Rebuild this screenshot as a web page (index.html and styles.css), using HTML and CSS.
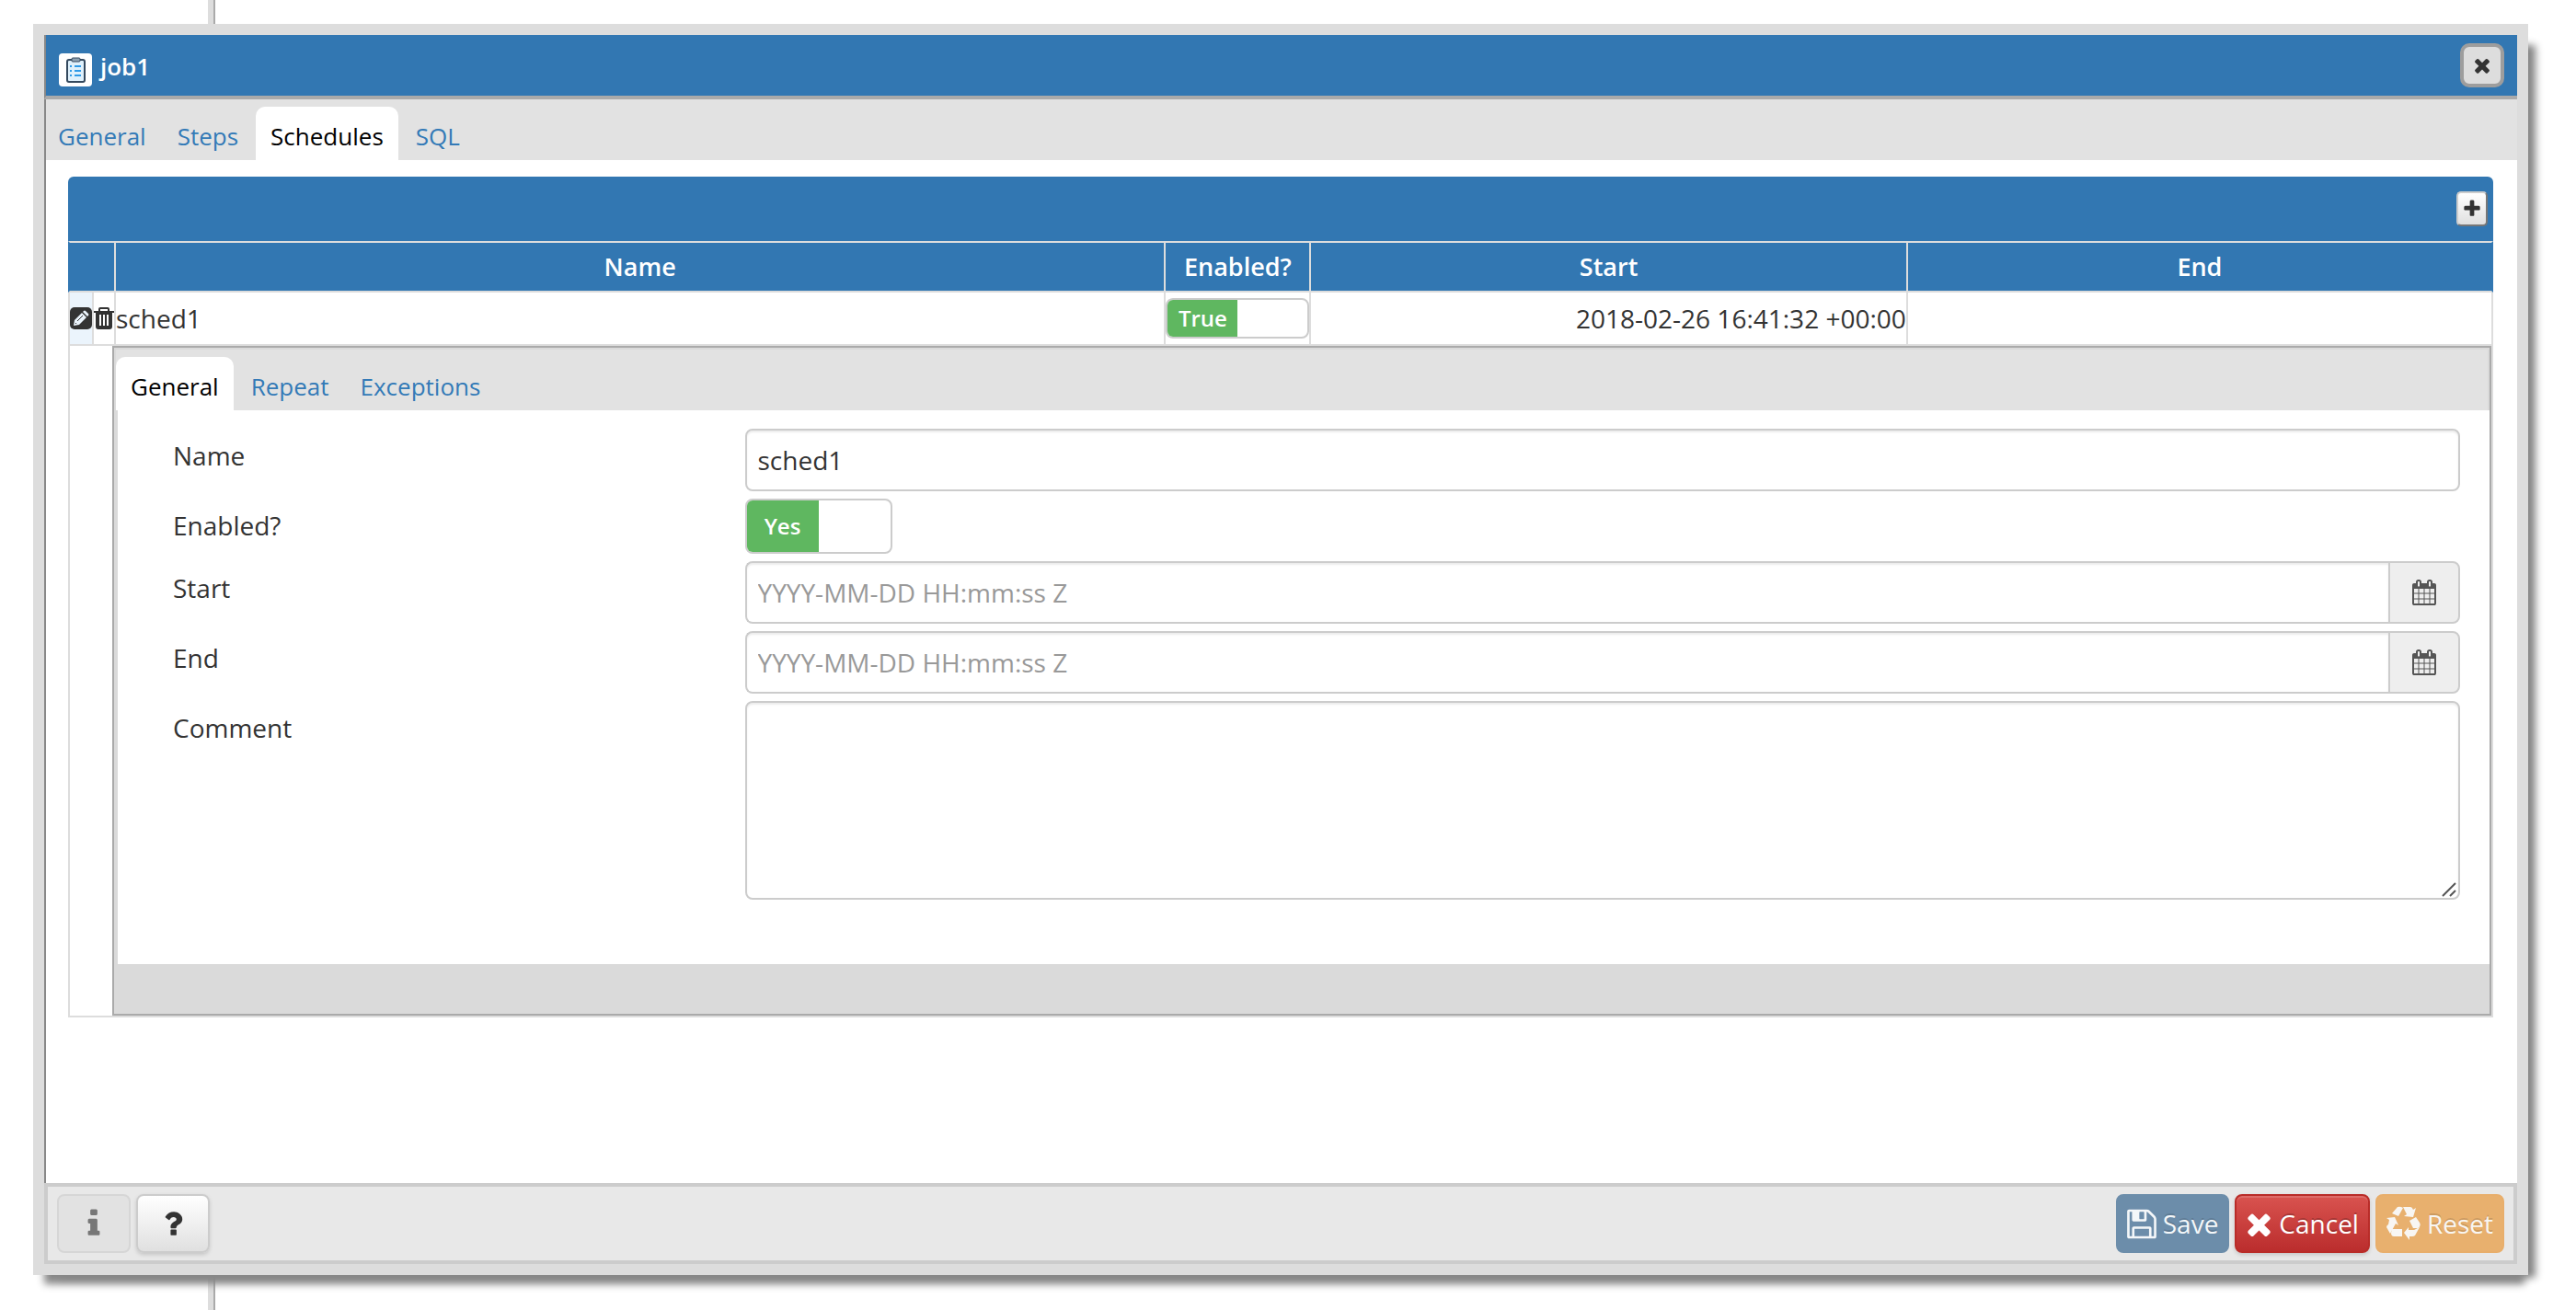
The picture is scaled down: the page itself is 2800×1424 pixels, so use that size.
FILE: index.html
```html
<!DOCTYPE html>
<html lang="en">
<head>
    <meta charset="UTF-8">
    <meta name="viewport" content="width=device-width, initial-scale=1.0">
    <title>job1</title>
    <link rel="stylesheet" href="styles.css">
</head>
<body>
    <!-- shared icon shapes -->
    <svg class="sprite" aria-hidden="true">
        <symbol id="icon-times" viewBox="192 0 1408 1792"><path d="M1490 1322q0 40-28 68l-136 136q-28 28-68 28t-68-28l-294-294-294 294q-28 28-68 28t-68-28l-136-136q-28-28-28-68t28-68l294-294-294-294q-28-28-28-68t28-68l136-136q28-28 68-28t68 28l294 294 294-294q28-28 68-28t68 28l136 136q28 28 28 68t-28 68l-294 294 294 294q28 28 28 68z"/></symbol>
        <symbol id="icon-calendar" viewBox="0 0 1792 1792"><path d="M192 1664h288v-288h-288v288zm352 0h320v-288h-320v288zm-352-352h288v-320h-288v320zm352 0h320v-320h-320v320zm-352-384h288v-288h-288v288zm736 736h320v-288h-320v288zm-384-736h320v-288h-320v288zm768 736h288v-288h-288v288zm-384-352h320v-320h-320v320zm-352-864v-288q0-13-9.5-22.5t-22.5-9.5h-64q-13 0-22.5 9.5t-9.5 22.5v288q0 13 9.5 22.5t22.5 9.5h64q13 0 22.5-9.5t9.5-22.5zm736 864h288v-320h-288v320zm-384-384h320v-288h-320v288zm384 0h288v-288h-288v288zm32-480v-288q0-13-9.5-22.5t-22.5-9.5h-64q-13 0-22.5 9.5t-9.5 22.5v288q0 13 9.5 22.5t22.5 9.5h64q13 0 22.5-9.5t9.5-22.5zm384-64v1280q0 52-38 90t-90 38h-1408q-52 0-90-38t-38-90v-1280q0-52 38-90t90-38h128v-96q0-66 47-113t113-47h64q66 0 113 47t47 113v96h384v-96q0-66 47-113t113-47h64q66 0 113 47t47 113v96h128q52 0 90 38t38 90z"/></symbol>
    </svg>

    <div class="splitter"></div>

    <div class="dialog" role="dialog" aria-labelledby="dialog-title">
        <div class="dialog-header">
            <svg class="job-icon" viewBox="0 0 36 36">
                <rect width="36" height="36" rx="4" fill="#fff"/>
                <rect x="9" y="7" width="19" height="24" rx="2" fill="#dff1fc" stroke="#34495e" stroke-width="2"/>
                <rect x="14" y="5" width="9" height="4" rx="1" fill="#8fa3b3" stroke="#34495e" stroke-width="1"/>
                <path d="M12 14h2M12 19h2M12 24h2M17 14h7M17 19h7M17 24h7" stroke="#2f9be8" stroke-width="2"/>
            </svg>
            <h1 class="dialog-title" id="dialog-title">job1</h1>
            <button class="close" type="button" aria-label="Close"><svg class="icon-sm"><use href="#icon-times"/></svg></button>
        </div>

        <nav class="tabs">
            <a class="tab" href="#general">General</a>
            <a class="tab" href="#steps">Steps</a>
            <a class="tab active" href="#schedules">Schedules</a>
            <a class="tab" href="#sql">SQL</a>
        </nav>

        <div class="dialog-body">
            <div class="grid-header">
                <button class="add" type="button" aria-label="Add row"><svg class="icon-add" viewBox="0 0 1792 1792"><path d="M1600 736v192q0 40-28 68t-68 28h-416v416q0 40-28 68t-68 28h-192q-40 0-68-28t-28-68v-416h-416q-40 0-68-28t-28-68v-192q0-40 28-68t68-28h416v-416q0-40 28-68t68-28h192q40 0 68 28t28 68v416h416q40 0 68 28t28 68z"/></svg></button>
            </div>
            <table class="grid">
                <colgroup>
                    <col class="col-edit">
                    <col class="col-delete">
                    <col class="col-name">
                    <col class="col-enabled">
                    <col class="col-start">
                    <col class="col-end">
                </colgroup>
                <thead>
                    <tr>
                        <th colspan="2"></th>
                        <th>Name</th>
                        <th>Enabled?</th>
                        <th>Start</th>
                        <th>End</th>
                    </tr>
                </thead>
                <tbody>
                    <tr class="row">
                        <td class="edit-cell">
                            <button class="cell-btn" type="button" aria-label="Edit row"><svg class="icon-edit" viewBox="0 0 24 24">
                                <rect width="24" height="24" rx="5" fill="#333"/>
                                <path d="M4 20l1-6 8-8 5 5-8 8z" fill="#ebf4fc"/>
                                <path d="M14 5l1-1q1-1 2 0l3 3q1 1 0 2l-1 1z" fill="#ebf4fc"/>
                                <path d="M8 15l6-6M6 17l1 1" stroke="#333" stroke-width="1"/>
                            </svg></button>
                        </td>
                        <td>
                            <button class="cell-btn" type="button" aria-label="Delete row"><svg class="icon-trash" viewBox="0 0 22 24">
                                <path d="M6 4V2q0-1 1-1h8q1 0 1 1v2" fill="none" stroke="#333" stroke-width="2"/>
                                <path d="M0 4h22v2h-2v15q0 3-3 3H5q-3 0-3-3V6H0z" fill="#333"/>
                                <path d="M7 8v12M11 8v12M15 8v12" stroke="#fff" stroke-width="2"/>
                            </svg></button>
                        </td>
                        <td>sched1</td>
                        <td><label class="switch switch-sm"><input type="checkbox" checked><span class="switch-on">True</span></label></td>
                        <td class="date">2018-02-26 16:41:32 +00:00</td>
                        <td></td>
                    </tr>
                    <tr class="detail-row">
                        <td colspan="2"></td>
                        <td class="detail" colspan="4">
                            <div class="subform">
                                <nav class="tabs subtabs">
                                    <a class="tab active" href="#sched-general">General</a>
                                    <a class="tab" href="#sched-repeat">Repeat</a>
                                    <a class="tab" href="#sched-exceptions">Exceptions</a>
                                </nav>
                                <form class="fields">
                                    <label for="name">Name</label>
                                    <input class="control" id="name" type="text" value="sched1">

                                    <label for="enabled">Enabled?</label>
                                    <div class="switch"><input id="enabled" type="checkbox" checked><span class="switch-on">Yes</span></div>

                                    <label for="start">Start</label>
                                    <div class="input-group">
                                        <input class="control" id="start" type="text" placeholder="YYYY-MM-DD HH:mm:ss Z">
                                        <button class="addon" type="button" aria-label="Pick start date"><svg class="icon-cal"><use href="#icon-calendar"/></svg></button>
                                    </div>

                                    <label for="end">End</label>
                                    <div class="input-group">
                                        <input class="control" id="end" type="text" placeholder="YYYY-MM-DD HH:mm:ss Z">
                                        <button class="addon" type="button" aria-label="Pick end date"><svg class="icon-cal"><use href="#icon-calendar"/></svg></button>
                                    </div>

                                    <label for="comment">Comment</label>
                                    <div class="comment-wrap">
                                        <textarea class="control" id="comment"></textarea>
                                        <svg class="grip" viewBox="0 0 16 16"><path d="M1 15L15 1M9 15l6-6" stroke="#555" stroke-width="2"/></svg>
                                    </div>
                                </form>
                            </div>
                        </td>
                    </tr>
                </tbody>
            </table>
        </div>

        <div class="dialog-footer">
            <button class="btn btn-default" type="button" aria-label="Information" disabled><svg class="icon-md" viewBox="0 0 1792 1792"><path d="M1216 1344v128q0 26-19 45t-45 19h-512q-26 0-45-19t-19-45v-128q0-26 19-45t45-19h64v-384h-64q-26 0-45-19t-19-45v-128q0-26 19-45t45-19h384q26 0 45 19t19 45v576h64q26 0 45 19t19 45zm-128-1152v192q0 26-19 45t-45 19h-256q-26 0-45-19t-19-45v-192q0-26 19-45t45-19h256q26 0 45 19t19 45z"/></svg></button>
            <button class="btn btn-default" type="button" aria-label="Help"><svg class="icon-md" viewBox="0 0 1792 1792"><path d="M1088 1256v240q0 16-12 28t-28 12h-240q-16 0-28-12t-12-28v-240q0-16 12-28t28-12h240q16 0 28 12t12 28zm316-600q0 54-15.5 101t-35 76.5-55 59.5-57.5 43.5-61 35.5q-41 23-68.5 65t-27.5 67q0 17-12 32.5t-28 15.5h-240q-15 0-25.5-18.5t-10.5-37.5v-45q0-83 65-156.5t143-108.5q59-27 84-56t25-76q0-42-46.5-74t-107.5-32q-65 0-108 29-35 25-107 115-13 16-31 16-12 0-25-8l-164-125q-13-10-15.5-25t5.5-28q160-266 464-266 80 0 161 31t146 83 106 127.5 41 158.5z"/></svg></button>
            <div class="actions">
                <button class="btn btn-save" type="button" disabled><svg class="icon-lg" viewBox="128 0 1536 1792"><path d="M512 1536h768v-384h-768v384zm896 0h128v-896q0-14-10-38.5t-20-34.5l-281-281q-10-10-34-20t-39-10v416q0 40-28 68t-68 28h-576q-40 0-68-28t-28-68v-416h-128v1280h128v-416q0-40 28-68t68-28h832q40 0 68 28t28 68v416zm-384-928v-320q0-13-9.5-22.5t-22.5-9.5h-192q-13 0-22.5 9.5t-9.5 22.5v320q0 13 9.5 22.5t22.5 9.5h192q13 0 22.5-9.5t9.5-22.5zm640 32v928q0 40-28 68t-68 28h-1344q-40 0-68-28t-28-68v-1344q0-40 28-68t68-28h928q40 0 88 20t76 48l280 280q28 28 48 76t20 88z"/></svg>Save</button>
                <button class="btn btn-cancel" type="button"><svg class="icon-x"><use href="#icon-times"/></svg>Cancel</button>
                <button class="btn btn-reset" type="button" disabled><svg class="icon-recycle" viewBox="0 0 37 38">
                    <path d="M12 1q3-1 6 1l-5 9-7-3z"/>
                    <path d="M18 1h8q2 0 3 3l3-2-3 10-10-1 3-2z"/>
                    <path d="M0 13l9-1 4 9-3-2-6 11-4-7q0-2 2-3l1-5z"/>
                    <path d="M6 25h11v8H8q-3 0-3-4z"/>
                    <path d="M25 16l7-4 4 6q2 4-2 6h-5z"/>
                    <path d="M19 29l5-6v3h6l6-3-5 9q-1 1-3 1h-3v4z"/>
                </svg>Reset</button>
            </div>
        </div>
    </div>
</body>
</html>
```

FILE: styles.css
```css
* {
    box-sizing: border-box;
}
body {
    margin: 0;
    min-height: 100vh;
    display: flex;
    position: relative;
    padding: 26px 52px 38px 36px;
    background: #fff;
    color: #333;
    font-family: "Open Sans", "Noto Sans", sans-serif;
    font-size: 28px;
    line-height: 38px;
}
button, input, textarea {
    font: inherit;
    color: inherit;
    margin: 0;
}
button {
    padding: 0;
    display: flex;
    align-items: center;
    justify-content: center;
}
svg {
    display: block;
    fill: currentColor;
    flex: none;
}
.sprite {
    position: absolute;
    width: 0;
    height: 0;
}

/* panel divider behind the dialog */
.splitter {
    position: absolute;
    top: 0;
    bottom: 0;
    left: 226px;
    width: 8px;
    background: #ddd;
    border-right: 2px solid #aaa;
}

/* dialog */
.dialog {
    position: relative;
    flex: 1;
    min-width: 0;
    display: flex;
    flex-direction: column;
    border: 12px solid #ddd;
    background: #fff;
    box-shadow: 4px 18px 8px -8px #888, 18px 13px 8px -10px #888;
}
.dialog-header {
    display: flex;
    align-items: center;
    height: 70px;
    padding: 0 14px;
    background: #3277b2;
    border-bottom: 4px solid #aaa;
    border-left: 2px solid #888;
    color: #fff;
}
.job-icon {
    width: 36px;
    height: 36px;
    margin-top: 10px;
}
.dialog-title {
    flex: 1;
    margin: 2px 0 0 9px;
    font-size: 26px;
    font-weight: 600;
}
.close {
    width: 48px;
    height: 48px;
    border: 4px solid #9d9d9d;
    border-radius: 10px;
    background: #ddd;
    color: #333;
}
.icon-sm {
    width: 24px;
    height: 24px;
}

/* tabs */
.tabs {
    display: flex;
    gap: 4px;
    height: 66px;
    padding-top: 8px;
    background: #e2e2e2;
    box-shadow: inset 2px 0 #888;
    font-size: 26px;
}
.tab {
    padding: 8px 15px;
    border-radius: 10px 10px 0 0;
    color: #337ab7;
    line-height: 48px;
    text-decoration: none;
}
.tab.active {
    padding: 8px 16px;
    background: #fff;
    color: #000;
}

.dialog-body {
    flex: 1;
    padding: 18px 26px 0 24px;
    border-left: 2px solid #888;
}

/* schedules grid */
.grid-header {
    display: flex;
    justify-content: flex-end;
    align-items: center;
    height: 70px;
    padding-right: 6px;
    background: #3277b2;
    border-radius: 6px 6px 0 0;
}
.add {
    width: 34px;
    height: 38px;
    border: 2px solid #ccc;
    border-right-color: #777;
    border-bottom-color: #777;
    border-radius: 5px;
    background: linear-gradient(#fff, #e0e0e0);
    color: #333;
}
.icon-add {
    width: 22px;
    height: 22px;
}
.grid {
    width: 100%;
    table-layout: fixed;
    border-spacing: 0;
}
.col-edit { width: 28px; }
.col-delete { width: 24px; }
.col-name { width: 43.3%; }
.col-enabled { width: 158px; }
.col-start { width: 24.6%; }
.grid th {
    height: 56px;
    padding: 0;
    background: #3277b2;
    border: solid #ddd;
    border-width: 2px 2px 2px 0;
    color: #fff;
    font-size: 27px;
    font-weight: 600;
}
.grid th:first-child {
    border-left: 2px solid #3277b2;
}
.grid th:last-child {
    border-right-color: #3277b2;
}
.grid td {
    padding: 0;
    border: solid #ddd;
    border-width: 0 2px 2px 0;
}
.grid td:first-child {
    border-left: 2px solid #ddd;
}
.row td {
    height: 58px;
}
.row .edit-cell {
    background: #ebf4fc;
}
.cell-btn {
    width: 100%;
    border: 0;
    background: none;
}
.icon-edit {
    width: 24px;
    height: 24px;
}
.icon-trash {
    width: 22px;
    height: 24px;
}
.date {
    text-align: right;
}
.grid .detail-row td:first-child {
    border-right: 0;
}

/* toggle switch */
.switch {
    display: flex;
    width: 160px;
    height: 60px;
    overflow: hidden;
    border: 2px solid #ccc;
    border-radius: 8px;
    background: #fff;
}
.switch input {
    appearance: none;
    position: absolute;
    width: 160px;
    height: 60px;
}
.switch-on {
    display: flex;
    align-items: center;
    justify-content: center;
    width: 50%;
    background: #5fb760;
    color: #fff;
    font-size: 24px;
    font-weight: 600;
}
.switch-sm {
    width: 156px;
    height: 44px;
}

/* schedule detail form */
.subform {
    margin-left: -4px;
    padding: 2px 0 54px 2px;
    border: 2px solid #aaa;
    background: #dadada;
}
.subtabs {
    margin-right: 2px;
    box-shadow: none;
}
.fields {
    display: grid;
    grid-template-columns: 1fr 3fr;
    row-gap: 8px;
    margin-left: 2px;
    padding: 20px 32px 70px 60px;
    background: #fff;
}
.fields > label {
    padding-top: 10px;
}
.control {
    display: block;
    width: 100%;
    height: 68px;
    padding: 0 12px;
    border: 2px solid #ccc;
    border-radius: 8px;
    background: #fff;
    box-shadow: inset 0 2px 2px rgba(0, 0, 0, .075);
    outline: 0;
}
.control::placeholder {
    color: #999;
    opacity: 1;
}
.input-group {
    display: flex;
}
.input-group .control {
    flex: 1;
    width: auto;
    border-right: 0;
    border-radius: 8px 0 0 8px;
}
.addon {
    width: 78px;
    height: 68px;
    border: 2px solid #ccc;
    border-radius: 0 8px 8px 0;
    background: #eee;
    color: #555;
}
.icon-cal {
    width: 28px;
    height: 28px;
}
.comment-wrap {
    position: relative;
}
.comment-wrap .control {
    height: 216px;
    padding: 12px;
    resize: none;
}
.grip {
    position: absolute;
    right: 4px;
    bottom: 3px;
    width: 16px;
    height: 16px;
}

/* footer */
.dialog-footer {
    display: flex;
    gap: 6px;
    height: 88px;
    padding: 8px 10px;
    border: 4px solid #ccc;
    background: #e8e8e8;
}
.actions {
    display: flex;
    gap: 6px;
    margin-left: auto;
}
.btn {
    height: 64px;
    padding: 0 10px;
    border: 2px solid #ccc;
    border-radius: 8px;
    color: #fff;
}
.btn-default {
    width: 80px;
    background: linear-gradient(#fff, #e0e0e0);
    box-shadow: 0 2px 4px rgba(0, 0, 0, .15);
    color: #333;
}
.btn-default:disabled {
    border-color: #d6d6d6;
    background: #e2e2e2;
    box-shadow: none;
    color: #777;
}
.icon-md {
    width: 36px;
    height: 36px;
}
.icon-lg {
    width: 32px;
    height: 37px;
    margin-right: 7px;
}
.icon-x {
    width: 29px;
    height: 37px;
    margin-right: 7px;
}
.icon-recycle {
    width: 37px;
    height: 38px;
    margin-right: 7px;
}
.btn-save {
    border-color: #6c8daa;
    background: #6c8daa;
    color: #f4f7f9;
    text-shadow: 0 -2px 0 rgba(0, 0, 0, .12);
}
.btn-cancel {
    border-color: #b92c28;
    background: linear-gradient(#d9534f, #bb2d2d);
    text-shadow: 0 -2px 0 rgba(0, 0, 0, .2);
    box-shadow: inset 0 2px 0 rgba(255, 255, 255, .15), 0 2px 4px rgba(0, 0, 0, .15);
}
.btn-reset {
    border-color: #e8ae6b;
    background: #e8b06e;
    color: #f8f6f3;
    text-shadow: 0 -2px 0 rgba(0, 0, 0, .12);
}
```
